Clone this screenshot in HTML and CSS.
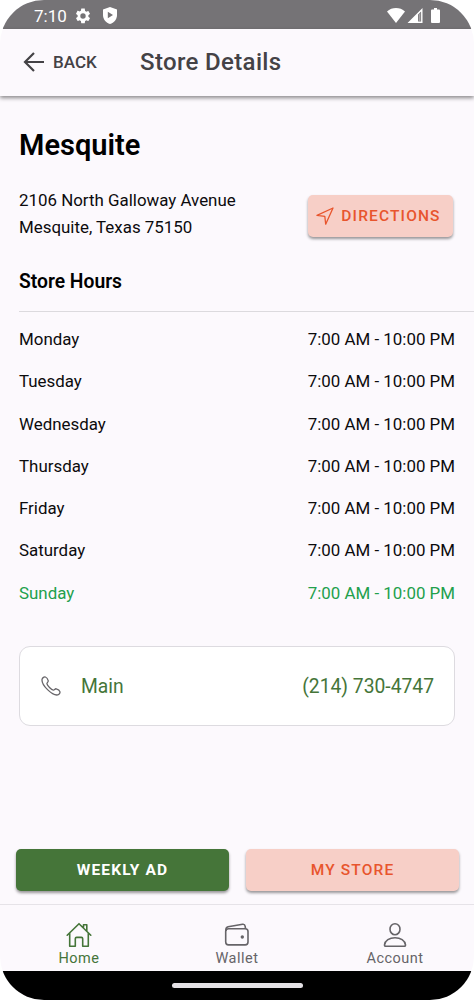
FILE: index.html
```html
<!DOCTYPE html>
<html lang="en">
<head>
    <meta charset="UTF-8">
    <meta name="viewport" content="width=device-width, initial-scale=1.0">
    <title>Store Details</title>
    <link rel="stylesheet" href="styles.css">
</head>
<body>
    <div class="phone">
        <div class="status-bar">
            <span class="time">7:10</span>
            <svg class="gear" width="18" height="18" viewBox="0 0 24 24"><path fill="#fff" d="M19.14 12.94c.04-.3.06-.61.06-.94s-.02-.64-.07-.94l2.03-1.58a.49.49 0 0 0 .12-.61l-1.92-3.32a.49.49 0 0 0-.59-.22l-2.39.96a7 7 0 0 0-1.62-.94l-.36-2.54A.48.48 0 0 0 13.92 2h-3.84a.47.47 0 0 0-.47.41l-.36 2.54c-.59.24-1.13.57-1.62.94l-2.39-.96a.48.48 0 0 0-.59.22L2.74 8.87a.47.47 0 0 0 .12.61l2.03 1.58a7 7 0 0 0 0 1.88l-2.03 1.58a.49.49 0 0 0-.12.61l1.92 3.32c.12.22.37.29.59.22l2.39-.96c.5.38 1.03.7 1.62.94l.36 2.54c.05.24.24.41.48.41h3.84c.24 0 .44-.17.47-.41l.36-2.54a7 7 0 0 0 1.62-.94l2.39.96c.22.08.47 0 .59-.22l1.92-3.32a.47.47 0 0 0-.12-.61zM12 15.6a3.6 3.6 0 1 1 0-7.2 3.6 3.6 0 0 1 0 7.2z"/></svg>
            <svg class="shield" width="14" height="17" viewBox="0 0 14 17"><path fill="#fff" d="M7 0l7 2.600v5.400c0 4.500-3 7.600-7 9-4-1.400-7-4.500-7-9V2.600z"/><path fill="#757376" d="M4.800 4.800v6.400l5.200-3.200z"/></svg>
            <div class="signals">
                <svg width="18" height="15" viewBox="0 0 18 15"><path fill="#fff" d="M0 3.400C5-1.100 13-1.100 18 3.400L9 15z"/></svg>
                <svg width="16" height="15" viewBox="0 0 16 15"><path fill="#fff" fill-rule="evenodd" d="M15.500 0v15H.5zM14.100 3.400v10.200h-3V6.400z"/><path fill="#b9b7ba" d="M12.300 6v7.600h1V5z"/></svg>
                <svg class="battery" width="9" height="15" viewBox="0 0 9 15"><path fill="#fff" d="M3 0h3v1.500h2q1 0 1 1V14q0 1-1 1H1q-1 0-1-1V2.500q0-1 1-1h2z"/></svg>
            </div>
        </div>

        <header class="header">
            <a class="back">
                <svg width="22" height="20" viewBox="0 0 22 20" fill="none" stroke="#444246" stroke-width="2.200"><path d="M21 10H2M11 1L2 10l9 9"/></svg>
                BACK
            </a>
            <h1>Store Details</h1>
        </header>

        <main class="content">
            <h2>Mesquite</h2>
            <div class="address-row">
                <address>2106 North Galloway Avenue<br>Mesquite, Texas 75150</address>
                <a class="btn btn-light directions">
                    <svg width="18" height="18" viewBox="0 0 18 18" fill="none" stroke="#e8552d" stroke-width="1.300" stroke-linejoin="round"><path d="M17 1L1 8.400l7.800.9.900 7.900z"/></svg>
                    DIRECTIONS
                </a>
            </div>

            <h3>Store Hours</h3>
            <ul class="hours">
                <li><span>Monday</span><span>7:00 AM - 10:00 PM</span></li>
                <li><span>Tuesday</span><span>7:00 AM - 10:00 PM</span></li>
                <li><span>Wednesday</span><span>7:00 AM - 10:00 PM</span></li>
                <li><span>Thursday</span><span>7:00 AM - 10:00 PM</span></li>
                <li><span>Friday</span><span>7:00 AM - 10:00 PM</span></li>
                <li><span>Saturday</span><span>7:00 AM - 10:00 PM</span></li>
                <li class="today"><span>Sunday</span><span>7:00 AM - 10:00 PM</span></li>
            </ul>

            <div class="phone-card">
                <svg width="20" height="20" viewBox="0 0 20 20" fill="none" stroke="#666468" stroke-width="1.300" stroke-linejoin="round"><path d="M1.100 3.200C1.500 1.700 3.200.6 4.400 1c1.100.4 2.500 2.600 2.800 3.700.3 1.200-1.400 1.900-1.300 3 .2 1.700 4.600 6.200 6.400 6.400 1.100.1 1.700-1.600 2.900-1.300 1.100.3 3.400 1.700 3.700 2.800.4 1.400-.8 2.900-2.200 3.300C11.500 19.900 0 9.100 1.100 3.200z"/></svg>
                <span class="label">Main</span>
                <span>(214) 730-4747</span>
            </div>
        </main>

        <div class="actions">
            <a class="btn btn-green">WEEKLY AD</a>
            <a class="btn btn-light">MY STORE</a>
        </div>

        <nav class="tabs">
            <a class="tab active">
                <svg width="26" height="26" viewBox="0 0 26 26" fill="none" stroke="currentColor" stroke-width="1.600" stroke-linecap="round" stroke-linejoin="round"><path d="M1.200 13.200L13 1.700l11.800 11.500M3.700 11v13.300h5.600v-7.600q0-1.300 1.300-1.300h4.800q1.300 0 1.300 1.300v7.600h5.600V11M17.500 5.500V2.800h3.300v6.200"/></svg>
                Home
            </a>
            <a class="tab">
                <svg width="26" height="26" viewBox="0 0 26 26" fill="none" stroke="currentColor" stroke-width="1.600" stroke-linejoin="round"><rect x="1.700" y="6.700" width="22.300" height="16.200" rx="2.800"/><path d="M1.900 9V7.500q0-2.200 2.200-2.700l14.500-2.500q2.200-.3 2.600 2l.3 2.400"/><circle cx="18.300" cy="15" r="1.700" fill="currentColor" stroke="none"/></svg>
                Wallet
            </a>
            <a class="tab">
                <svg width="26" height="26" viewBox="0 0 26 26" fill="none" stroke="currentColor" stroke-width="1.600" stroke-linejoin="round"><ellipse cx="13" cy="7.200" rx="5" ry="5.500"/><path d="M3.800 24.200q-1.400 0-1.300-1.400C3 18.500 7.500 15.700 13 15.700s10 2.800 10.500 7.100q.1 1.400-1.300 1.400z"/></svg>
                Account
            </a>
        </nav>
        <div class="gesture-bar"><div class="handle"></div></div>
    </div>
</body>
</html>
```
FILE: styles.css
```css
* {
    box-sizing: border-box;
}
body {
    margin: 0;
    background: #fff;
    font-family: Roboto, Arial, sans-serif;
    color: #0c0b0d;
}
h1, h2, h3, ul {
    margin: 0;
    padding: 0;
}
svg {
    display: block;
    flex: none;
}
.phone {
    display: flex;
    flex-direction: column;
    width: 474px;
    height: 1000px;
    border-radius: 44px;
    overflow: hidden;
    background: #fcf9fd;
}
.status-bar {
    display: flex;
    align-items: center;
    height: 29px;
    padding: 2px 34px 0;
    background: #757376;
    color: #fff;
    font-size: 17px;
    flex: none;
}
.gear {
    margin-left: 7px;
}
.shield {
    margin-left: 11px;
}
.signals {
    display: flex;
    gap: 2px;
    margin-left: auto;
}
.battery {
    margin-left: 6px;
}
.header {
    display: flex;
    align-items: center;
    height: 67px;
    padding: 0 0 1px 23px;
    color: #444246;
    box-shadow: 0 2px 4px rgba(0, 0, 0, 0.45);
    flex: none;
}
.back {
    display: flex;
    align-items: center;
    gap: 8px;
    width: 117px;
    font-size: 17px;
    font-weight: 500;
}
h1 {
    font-size: 24px;
    font-weight: 500;
    letter-spacing: 0.350px;
}
.content {
    flex: 1;
    padding: 31px 19px 0;
}
h2 {
    font-size: 29px;
    font-weight: 600;
    line-height: 36px;
    color: #000;
}
.address-row {
    display: flex;
    justify-content: space-between;
    margin-top: 24px;
}
address {
    font-style: normal;
    font-size: 16.900px;
    line-height: 26.500px;
}
.btn {
    display: flex;
    align-items: center;
    justify-content: center;
    height: 42px;
    padding-bottom: 1px;
    border-radius: 5px;
    font-size: 15.500px;
    font-weight: 500;
    letter-spacing: 1.150px;
    box-shadow: 0 2px 3px rgba(0, 0, 0, 0.4);
}
.btn-light {
    background: #f7cfc7;
    color: #e8552d;
}
.btn-green {
    background: #457539;
    color: #fff;
    font-weight: 700;
}
.directions {
    width: 145px;
    margin: 8px 2px 0 0;
    padding-right: 4px;
    gap: 7px;
}
h3 {
    margin-top: 29px;
    font-size: 19.300px;
    font-weight: 600;
    line-height: 26px;
    color: #000;
}
.hours {
    margin: 16px -19px 0 0;
    padding: 6px 19px 0 0;
    border-top: 1px solid #dcdade;
    list-style: none;
    font-size: 16.900px;
}
.hours li {
    display: flex;
    align-items: center;
    justify-content: space-between;
    height: 42.250px;
}
.hours .today {
    color: #22a04c;
}
.phone-card {
    display: flex;
    align-items: center;
    height: 80px;
    margin-top: 32px;
    padding: 1px 20px 0 21px;
    border: 1px solid #dddbe0;
    border-radius: 11px;
    background: #fff;
    color: #457539;
    font-size: 19.300px;
}
.phone-card .label {
    margin-left: 20px;
    margin-right: auto;
}
.actions {
    display: flex;
    gap: 17px;
    padding: 0 15px 13px 16px;
}
.actions .btn {
    flex: 1;
}
.tabs {
    display: flex;
    height: 67px;
    padding-top: 17px;
    border-top: 1px solid #e6e3e8;
    flex: none;
}
.tab {
    display: flex;
    flex: 1;
    flex-direction: column;
    align-items: center;
    gap: 2px;
    color: #666468;
    font-size: 14.500px;
    letter-spacing: 0.500px;
}
.tab.active {
    color: #457539;
}
.gesture-bar {
    display: flex;
    align-items: center;
    justify-content: center;
    height: 29px;
    background: #000;
    flex: none;
}
.handle {
    width: 131px;
    height: 5px;
    border-radius: 3px;
    background: #e4e1e5;
}
```
